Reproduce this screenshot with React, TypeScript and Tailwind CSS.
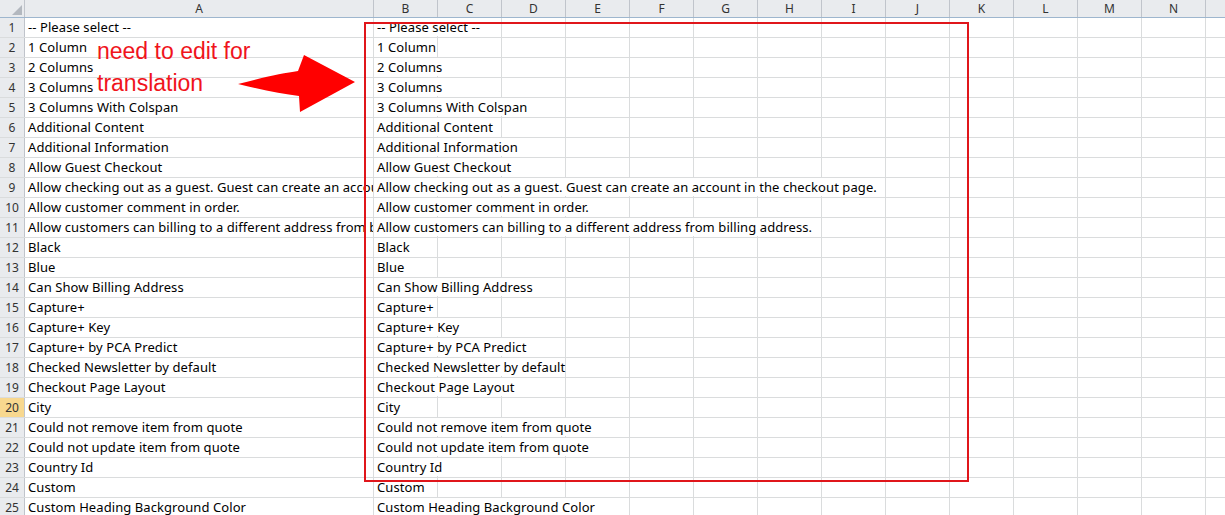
import React from 'react';

const rows = [
  '-- Please select --',
  '1 Column',
  '2 Columns',
  '3 Columns',
  '3 Columns With Colspan',
  'Additional Content',
  'Additional Information',
  'Allow Guest Checkout',
  'Allow checking out as a guest. Guest can create an account in the checkout page.',
  'Allow customer comment in order.',
  'Allow customers can billing to a different address from billing address.',
  'Black',
  'Blue',
  'Can Show Billing Address',
  'Capture+',
  'Capture+ Key',
  'Capture+ by PCA Predict',
  'Checked Newsletter by default',
  'Checkout Page Layout',
  'City',
  'Could not remove item from quote',
  'Could not update item from quote',
  'Country Id',
  'Custom',
  'Custom Heading Background Color',
];

const cols = ['C', 'D', 'E', 'F', 'G', 'H', 'I', 'J', 'K', 'L', 'M', 'N', ''];

const App: React.FC = () => {
  return (
    <div className="relative w-[1225px] h-[515px] overflow-hidden bg-white text-[13px] text-black" style={{ fontFamily: '"Noto Sans", "Open Sans", sans-serif' }}>
      {/* Column headers */}
      <div className="flex h-[18px] bg-[#e9ebee] border-b border-[#9eb6ce] text-[#333] text-[12px] leading-[17px]">
        <div className="w-[25px] shrink-0 border-r border-[#c0c4cb] relative">
          <div className="absolute right-[2px] bottom-[2px] w-0 h-0 border-l-[10px] border-l-transparent border-b-[10px] border-b-[#b3b8bf]" />
        </div>
        <div className="w-[349px] shrink-0 text-center border-r border-[#c0c4cb]">A</div>
        <div className="w-[64px] shrink-0 text-center border-r border-[#c0c4cb]">B</div>
        {cols.map((c, i) => (
          <div key={i} className="w-[64px] shrink-0 text-center border-r border-[#c0c4cb]">{c}</div>
        ))}
      </div>

      {/* Rows */}
      {rows.map((text, i) => (
        <div key={i} className="flex h-[20px] leading-[19px] border-b border-[#dadcdd]">
          <div className={`w-[25px] shrink-0 text-center text-[12px] text-[#333] border-r border-[#c0c4cb] ${i === 19 ? 'bg-[#f8d88f]' : 'bg-[#e9ebee]'}`}>{i + 1}</div>
          <div className="w-[349px] shrink-0 pl-[3px] whitespace-nowrap overflow-hidden tracking-[0.08px] border-r border-[#dadcdd]">{text}</div>
          <div className="w-[64px] shrink-0 pl-[3px] whitespace-nowrap overflow-visible relative z-10 tracking-[0.08px] border-r border-[#dadcdd]">
            <span className="bg-white">{text}</span>
          </div>
          {cols.map((_, j) => (
            <div key={j} className="w-[64px] shrink-0 border-r border-[#dadcdd]" />
          ))}
        </div>
      ))}

      {/* Annotation overlay */}
      <div className="absolute left-[364px] top-[22px] w-[605px] h-[460px] border-2 border-[#e0161b] z-20" />
      <div className="absolute left-[97px] top-[35px] text-[23px] leading-[32px] text-[#f0141c] z-20" style={{ fontFamily: '"Liberation Sans", Arial, sans-serif' }}>
        need to edit for
        <br />
        translation
      </div>
      <svg className="absolute left-[234px] top-[52px] z-20" width="124" height="62" viewBox="0 0 124 62">
        <path d="M4 32 C 30 25, 50 21, 64 19 L 70 3 L 121 30 L 66 60 L 65 44 C 48 42, 28 38, 4 32 Z" fill="#ff0000" />
      </svg>
    </div>
  );
};

export default App;
